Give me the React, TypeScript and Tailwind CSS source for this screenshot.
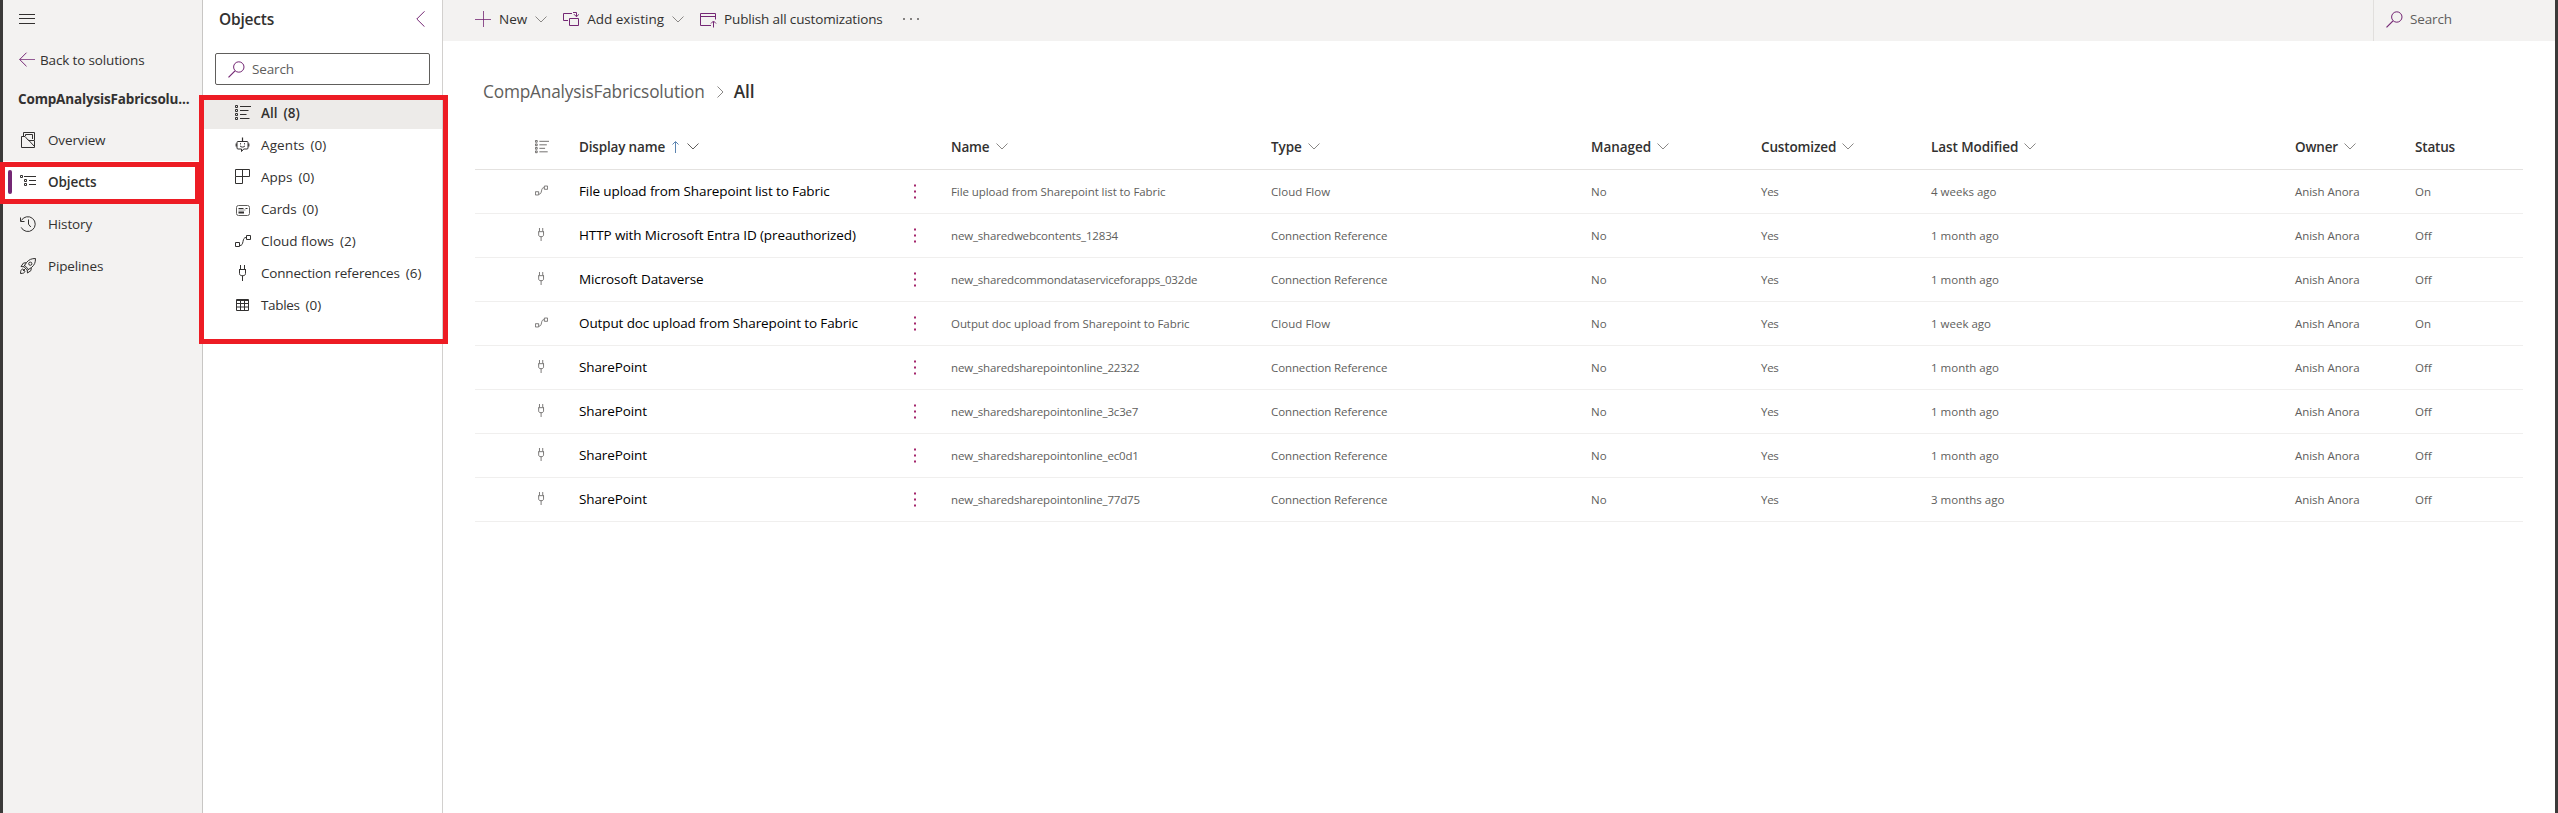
import type { ReactNode } from "react";

type IconProps = { className?: string };

function Svg({ className = "size-4", box = "0 0 16 16", children }: { className?: string; box?: string; children: ReactNode }) {
  return (
    <svg viewBox={box} className={`shrink-0 ${className}`} fill="none" stroke="currentColor" strokeWidth="1">
      {children}
    </svg>
  );
}

const Hamburger = () => (
  <Svg className="size-4 text-[#323130]">
    <path d="M0 3.5h16M0 7.5h16M0 12.5h16" />
  </Svg>
);

const BackArrow = () => (
  <Svg className="size-4 text-[#742774]">
    <path d="M0.5 7.5H16" strokeOpacity="0.75" />
    <path d="M7.5 0.7 0.7 7.5l6.8 6.8" />
  </Svg>
);

const ListIcon = ({ className }: IconProps) => (
  <Svg className={className}>
    <path d="M0.5 0.5h2v2h-2zM0.5 4.5h2v2h-2zM0.5 8.5h2v2h-2zM0.5 12.5h2v2h-2z" />
    <path d="M5 1.5h11M5 5.5h8.5M5 9.5h6.5M5 13.5h9.5" />
  </Svg>
);

const OverviewIcon = () => (
  <Svg className="size-4">
    <path d="M3.5 4V0.5h11V8M5.5 4V2.5h7V7" />
    <path d="M1.500 4.500h3.500L8.500 8.500h6v7h-13z" />
    <path d="M8 7.500 14.500 14.500" />
  </Svg>
);

const TreeIcon = () => (
  <Svg className="size-4">
    <path d="M0.5 1.5h2v2h-2zM4.5 5.5h2v2h-2zM4.5 9.5h2v2h-2z" />
    <path d="M4 2.5h12M9 6.5h7M9 10.5h7" />
  </Svg>
);

const HistoryIcon = () => (
  <Svg className="size-4">
    <path d="M1.3 4.6A7.4 7.4 0 1 1 1.2 11.4" />
    <path d="M0.5 1.5v4h4" />
    <path d="M8.5 3.5v4.700l2.300 2.800" />
  </Svg>
);

const RocketIcon = () => (
  <Svg className="size-4">
    <path d="M15.5 0.5c-4 0-6.500 1-9 4L3.800 8.600l3.600 3.600L11.500 9.500c3-2.500 4-5 4-9z" />
    <path d="M6.500 4.700 3.500 5 1 8.500l3 .3M11.300 9.500 11 12.500 7.500 15l-.3-3" />
    <circle cx="10.300" cy="5.700" r="1.600" />
    <path d="M4.700 7.500 8.500 11.300M2.800 11c-1.600.3-2.300 1.500-2.300 4.500 3 0 4.200-.7 4.500-2.300zM3 13l2.800-2.800" />
  </Svg>
);

const AgentIcon = () => (
  <Svg className="size-4">
    <path d="M7.500 0.500v3.500" strokeWidth="1.200" />
    <path d="M3 4.500h9a1 1 0 0 1 1 1v5.500a1 1 0 0 1-1 1H8.700l-2.200 2.500V12H3a1 1 0 0 1-1-1V5.500a1 1 0 0 1 1-1z" />
    <path d="M1.200 6.500v3M13.800 6.500v3" strokeWidth="1.200" />
    <path d="M5 8.800c1 1.700 4 1.700 5 0M5.500 6.200v1.200M9.500 6.200v1.200" />
  </Svg>
);

const AppsIcon = () => (
  <Svg className="size-4">
    <path d="M0.500 0.500h14v7h-14zM7.500 0.500v14h-7v-7" />
  </Svg>
);

const CardsIcon = () => (
  <Svg className="size-4">
    <rect x="1.500" y="4.500" width="13" height="10" rx="2" stroke="#605e5c" />
    <path d="M3.500 7.500h5M10.500 7.500h2" />
    <path d="M3.500 9h7" strokeOpacity="0.5" />
    <path d="M3.500 11.500h5.500" strokeWidth="2" />
  </Svg>
);

const FlowIcon = ({ className }: IconProps) => (
  <Svg className={className}>
    <path d="M0.500 9.500h4v4h-4zM11.500 2.500h4v4h-4z" />
    <path d="M5 12.500c2 0 2.500-1.500 3-4s1-4 3-4" />
  </Svg>
);

const PlugIcon = ({ className }: IconProps) => (
  <Svg className={className}>
    <path d="M5.500 0v4M9.500 0v4" />
    <path d="M4 4.500h7M4.500 4.500v4c0 1.500 1 2.200 3 2.200s3-.7 3-2.200v-4M7.500 10.500V16" />
  </Svg>
);

const TableIcon = () => (
  <Svg className="size-4">
    <path d="M1.500 2.500h12v11h-12zM1.500 3.500h12M1.500 6.500h12M1.500 10h12M5.500 3v10.500M9.500 3v10.500" />
  </Svg>
);

const SearchIcon = () => (
  <Svg className="size-[17px] text-[#742774]" box="0 0 17 17">
    <circle cx="10.800" cy="6" r="5.200" />
    <path d="M7 9.800 0.500 16.300" strokeWidth="1.200" />
  </Svg>
);

const ChevronDown = ({ className = "" }: IconProps) => (
  <Svg className={`h-[7px] w-3 ${className}`} box="0 0 12 7">
    <path d="M0.500 0.500 6 6l5.500-5.500" />
  </Svg>
);

const PlusIcon = () => (
  <Svg className="size-4 text-[#742774]">
    <path d="M0 8.500h16M8.500 0v16" strokeOpacity="0.8" />
  </Svg>
);

const AddExistingIcon = () => (
  <Svg className="size-4 text-[#742774]">
    <path d="M9 2.500H0.500v7H5M6.500 7.500h9v7h-9z" />
    <path d="M10 1.500h3.500v4M11 3.200l2.500 2.600L16 3.200" />
  </Svg>
);

const PublishIcon = () => (
  <Svg className="size-[17px] text-[#742774]" box="0 0 17 17">
    <path d="M11 14.500H0.500v-12h15v6M0.500 5.500h15" />
    <path d="M13.500 16.500v-6M11 12.500l2.500-2.500 2.500 2.500" />
  </Svg>
);

const nav = [
  { label: "Overview", icon: <OverviewIcon />, active: false },
  { label: "Objects", icon: <TreeIcon />, active: true },
  { label: "History", icon: <HistoryIcon />, active: false },
  { label: "Pipelines", icon: <RocketIcon />, active: false },
];

const objectTypes = [
  { label: "All", count: 8, icon: <ListIcon className="size-4" />, active: true, spacing: "tracking-normal" },
  { label: "Agents", count: 0, icon: <AgentIcon />, active: false, spacing: "tracking-[0.1px]" },
  { label: "Apps", count: 0, icon: <AppsIcon />, active: false, spacing: "tracking-normal" },
  { label: "Cards", count: 0, icon: <CardsIcon />, active: false, spacing: "tracking-[-0.14px]" },
  { label: "Cloud flows", count: 2, icon: <FlowIcon className="size-4" />, active: false, spacing: "tracking-normal" },
  { label: "Connection references", count: 6, icon: <PlugIcon className="size-4" />, active: false, spacing: "tracking-[-0.18px]" },
  { label: "Tables", count: 0, icon: <TableIcon />, active: false, spacing: "tracking-[-0.35px]" },
];

const columns = [
  { label: "Name", spacing: "tracking-[-0.14px]", menu: true },
  { label: "Type", spacing: "tracking-[-0.05px]", menu: true },
  { label: "Managed", spacing: "tracking-[-0.05px]", menu: true },
  { label: "Customized", spacing: "tracking-[-0.14px]", menu: true },
  { label: "Last Modified", spacing: "tracking-[-0.08px]", menu: true },
  { label: "Owner", spacing: "tracking-[-0.17px]", menu: true },
  { label: "Status", spacing: "tracking-[-0.18px]", menu: false },
];

const rows = [
  { title: "File upload from Sharepoint list to Fabric", name: "File upload from Sharepoint list to Fabric", flow: true, modified: "4 weeks ago", status: "On" },
  { title: "HTTP with Microsoft Entra ID (preauthorized)", name: "new_sharedwebcontents_12834", flow: false, modified: "1 month ago", status: "Off" },
  { title: "Microsoft Dataverse", name: "new_sharedcommondataserviceforapps_032de", flow: false, modified: "1 month ago", status: "Off" },
  { title: "Output doc upload from Sharepoint to Fabric", name: "Output doc upload from Sharepoint to Fabric", flow: true, modified: "1 week ago", status: "On" },
  { title: "SharePoint", name: "new_sharedsharepointonline_22322", flow: false, modified: "1 month ago", status: "Off" },
  { title: "SharePoint", name: "new_sharedsharepointonline_3c3e7", flow: false, modified: "1 month ago", status: "Off" },
  { title: "SharePoint", name: "new_sharedsharepointonline_ec0d1", flow: false, modified: "1 month ago", status: "Off" },
  { title: "SharePoint", name: "new_sharedsharepointonline_77d75", flow: false, modified: "3 months ago", status: "Off" },
];

const grid = "grid grid-cols-[60px_44px_328px_44px_320px_320px_170px_170px_364px_120px_108px] items-center";

function Sidebar() {
  return (
    <aside className="flex w-[200px] shrink-0 flex-col border-r border-[#c8c6c4] bg-[#f3f2f1]">
      <div className="flex h-[38px] items-center pl-4">
        <Hamburger />
      </div>
      <div className="flex h-11 items-center gap-[5px] pl-4 tracking-[-0.15px]">
        <BackArrow />
        <span>Back to solutions</span>
      </div>
      <div className="h-[37px] pl-[15px] leading-[34px] font-bold tracking-[-0.16px]">CompAnalysisFabricsolu...</div>
      <nav className="flex flex-col">
        {nav.map((item) => (
          <div
            key={item.label}
            className={`flex h-[42px] items-center ${item.active ? "bg-white font-semibold tracking-[-0.1px]" : "tracking-[-0.14px]"}`}
          >
            <span className={`ml-[5px] h-6 w-1 rounded-full ${item.active ? "bg-[#742774]" : ""}`} />
            <span className="ml-2 flex">{item.icon}</span>
            <span className="ml-3">{item.label}</span>
          </div>
        ))}
      </nav>
    </aside>
  );
}

function ObjectsPanel() {
  return (
    <section className="flex w-[240px] shrink-0 flex-col border-r border-[#d2d0ce] bg-white">
      <div className="flex h-[53px] items-start justify-between pt-2 pr-[17px] pl-4">
        <h2 className="text-[15.5px] leading-[22px] font-semibold tracking-[-0.2px]">Objects</h2>
        <Svg className="mt-[3px] h-4 w-[9px] text-[#742774]" box="0 0 9 16">
          <path d="M8.500 0.300 0.800 8l7.700 7.700" />
        </Svg>
      </div>
      <div className="ml-3 flex h-8 w-[215px] items-center gap-[7px] rounded-xs border border-[#605e5c] pl-3 tracking-[-0.13px] text-[#605e5c]">
        <SearchIcon />
        <span>Search</span>
      </div>
      <ul className="mt-3">
        {objectTypes.map((o) => (
          <li key={o.label} className={`flex h-8 items-center pl-8 ${o.active ? "bg-[#edebe9] font-semibold" : ""}`}>
            {o.icon}
            <span className={`ml-2.5 ${o.spacing}`}>{o.label}</span>
            <span className="ml-1.5">({o.count})</span>
          </li>
        ))}
      </ul>
    </section>
  );
}

function CommandBar() {
  return (
    <header className="flex h-[41px] items-center justify-between bg-[#f3f2f1] pb-[3px]">
      <div className="flex items-center pl-8">
        <PlusIcon />
        <span className="ml-2">New</span>
        <ChevronDown className="ml-2 text-[#8a8886]" />
        <span className="ml-4 flex"><AddExistingIcon /></span>
        <span className="ml-2">Add existing</span>
        <ChevronDown className="ml-2 text-[#8a8886]" />
        <span className="ml-4 flex"><PublishIcon /></span>
        <span className="ml-[7px] tracking-[-0.15px]">Publish all customizations</span>
        <Svg className="ml-5 size-4 text-[#605e5c]">
          <path d="M0 8h2M7 8h2M14 8h2" strokeWidth="1.500" />
        </Svg>
      </div>
      <div className="-mb-[3px] flex h-[41px] w-[182px] items-center gap-[7px] border-l border-[#e1dfdd] pb-[3px] pl-3 tracking-[-0.13px] text-[#605e5c]">
        <SearchIcon />
        <span>Search</span>
      </div>
    </header>
  );
}

function ObjectTable() {
  return (
    <div className="mt-5 ml-8 w-[2048px]">
      <div className={`${grid} h-[46px] border-b border-[#e4e2e0] font-semibold`}>
        <span />
        <ListIcon className="size-[14px] text-[#605e5c]" />
        <span className="flex items-center tracking-[-0.17px]">
          Display name
          <Svg className="ml-[7px] h-3 w-[7px] text-[#5c84b0]" box="0 0 7 12">
            <path d="M3.500 12V1M0.500 3.500l3-3 3 3" />
          </Svg>
          <ChevronDown className="ml-2 text-[#605e5c]" />
        </span>
        <span />
        {columns.map((c) => (
          <span key={c.label} className={`flex items-center ${c.spacing}`}>
            {c.label}
            {c.menu && <ChevronDown className="ml-1.5 text-[#8a8886]" />}
          </span>
        ))}
      </div>
      {rows.map((r, i) => (
        <div key={i} className={`${grid} h-11 border-b border-[#f0efee] text-[11.5px] text-[#605e5c]`}>
          <span />
          <span className="flex pb-0.5">{r.flow ? <FlowIcon className="size-[13px]" /> : <PlugIcon className="size-[13px]" />}</span>
          <span className="pb-0.5 text-[13.5px] tracking-[-0.11px] text-black">{r.title}</span>
          <Svg className="ml-[6px] h-[15px] w-1 text-[#a4266c]" box="0 0 4 15">
            <path d="M1 1.500h2M1 7.500h2M1 13.500h2" strokeWidth="2" />
          </Svg>
          <span className={r.name.startsWith("new_") ? "tracking-[-0.17px]" : "tracking-[-0.07px]"}>{r.name}</span>
          <span className={r.flow ? "tracking-[0.04px]" : "tracking-[-0.1px]"}>{r.flow ? "Cloud Flow" : "Connection Reference"}</span>
          <span>No</span>
          <span className="tracking-[-0.3px]">Yes</span>
          <span>{r.modified}</span>
          <span className="tracking-[-0.05px]">Anish Anora</span>
          <span>{r.status}</span>
        </div>
      ))}
    </div>
  );
}

export default function App() {
  return (
    <div className="relative flex h-[813px] w-[2558px] overflow-hidden bg-[#3b3a39] px-[3px] font-['Open_Sans','Noto_Sans',sans-serif] text-[13.5px] leading-5 whitespace-nowrap text-[#323130]">
      <Sidebar />
      <ObjectsPanel />
      <main className="flex-1 bg-white">
        <CommandBar />
        <div className="mt-[39px] flex h-6 items-center pl-10 text-[17.25px] leading-6">
          <span className="tracking-[-0.18px] text-[#605e5c]">CompAnalysisFabricsolution</span>
          <Svg className="ml-3 h-3 w-[7px] text-[#8a8886]" box="0 0 7 12">
            <path d="M0.500 0.500 6 6l-5.500 5.500" />
          </Svg>
          <span className="ml-2.5 font-semibold">All</span>
        </div>
        <ObjectTable />
      </main>
      <div className="absolute top-[162px] left-0 h-[42px] w-[200px] border-5 border-[#ed1c24]" />
      <div className="absolute top-[95px] left-[199px] h-[249px] w-[249px] border-5 border-[#ed1c24]" />
    </div>
  );
}
